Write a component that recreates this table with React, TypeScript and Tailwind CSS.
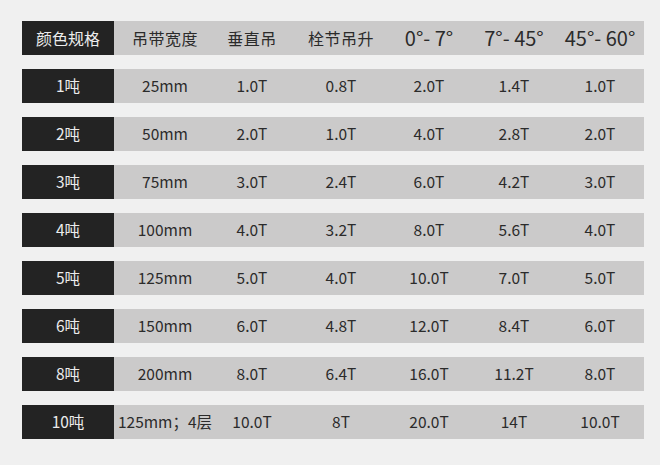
const headers = ['吊带宽度', '垂直吊', '栓节吊升', '0°- 7°', '7°- 45°', '45°- 60°'];

const rows: string[][] = [
  ['1吨', '25mm', '1.0T', '0.8T', '2.0T', '1.4T', '1.0T'],
  ['2吨', '50mm', '2.0T', '1.0T', '4.0T', '2.8T', '2.0T'],
  ['3吨', '75mm', '3.0T', '2.4T', '6.0T', '4.2T', '3.0T'],
  ['4吨', '100mm', '4.0T', '3.2T', '8.0T', '5.6T', '4.0T'],
  ['5吨', '125mm', '5.0T', '4.0T', '10.0T', '7.0T', '5.0T'],
  ['6吨', '150mm', '6.0T', '4.8T', '12.0T', '8.4T', '6.0T'],
  ['8吨', '200mm', '8.0T', '6.4T', '16.0T', '11.2T', '8.0T'],
  ['10吨', '125mm；4层', '10.0T', '8T', '20.0T', '14T', '10.0T'],
];

// column widths picked so the text centres line up with the picture
const grid =
  'grid grid-cols-[92px_102px_72px_106px_70px_100px_80px] h-[34px] items-center bg-[#cbcaca]';

export default function App() {
  return (
    <div
      className="w-[660px] h-[465px] bg-[#f0f0f0] pt-[21px] pl-[22px] text-[#2b2b2b]"
      style={{ fontFamily: '"Noto Sans CJK SC", "Noto Sans", sans-serif' }}
    >
      <div className="flex flex-col gap-[14px] w-[622px]">
        <div className={grid}>
          <div className="h-full flex items-center justify-center bg-[#232323] text-[#ececec] text-[16px]">
            颜色规格
          </div>
          {headers.map((h, i) => (
            <div
              key={h}
              className={
                (i < 3
                  ? 'text-center text-[16px] tracking-[0.5px]'
                  : 'text-center text-[20px] whitespace-nowrap') + (i === 5 ? ' pr-2' : '')
              }
            >
              {h}
            </div>
          ))}
        </div>
        {rows.map((r) => (
          <div key={r[0]} className={grid}>
            <div className="h-full flex items-center justify-center bg-[#232323] text-[#ececec] text-[15.5px]">
              {r[0]}
            </div>
            {r.slice(1).map((c, i) => (
              <div
                key={i}
                className={'text-center text-[15.5px] whitespace-nowrap' + (i === 5 ? ' pr-2' : '')}
              >
                {c}
              </div>
            ))}
          </div>
        ))}
      </div>
    </div>
  );
}
